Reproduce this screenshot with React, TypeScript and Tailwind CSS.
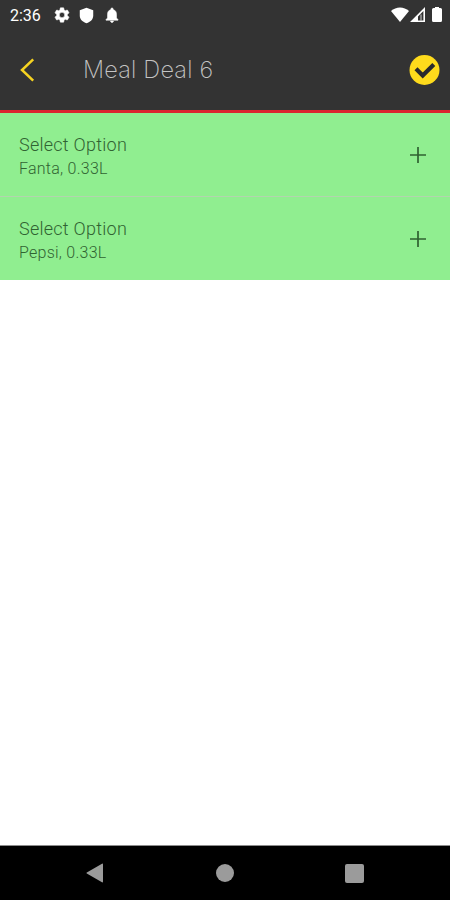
interface OptionRow {
  title: string;
  detail: string;
}

const options: OptionRow[] = [
  { title: "Select Option", detail: "Fanta, 0.33L" },
  { title: "Select Option", detail: "Pepsi, 0.33L" },
];

function StatusBar() {
  return (
    <div className="flex h-[30px] items-center justify-between pl-[10px] pr-2 text-white">
      <div className="flex items-center">
        <span className="w-[43px] pt-px text-[16px] leading-[29px]">2:36</span>
        <svg className="h-[18px] w-[18px]" viewBox="0 0 24 24" fill="currentColor" stroke="currentColor" strokeWidth="0.7">
          <path d="M19.14 12.94c.04-.3.06-.61.06-.94s-.02-.64-.07-.94l2.03-1.58c.18-.14.23-.41.12-.61l-1.92-3.32c-.12-.22-.37-.29-.59-.22l-2.39.96c-.5-.38-1.03-.7-1.62-.94l-.36-2.54c-.04-.24-.24-.41-.48-.41h-3.84c-.24 0-.43.17-.47.41l-.36 2.54c-.59.24-1.13.57-1.62.94l-2.39-.96c-.22-.08-.47 0-.59.22L2.74 8.87c-.12.21-.08.47.12.61l2.03 1.58c-.05.3-.09.63-.09.94s.02.64.07.94l-2.03 1.58c-.18.14-.23.41-.12.61l1.92 3.32c.12.22.37.29.59.22l2.39-.96c.5.38 1.03.7 1.62.94l.36 2.54c.05.24.24.41.48.41h3.84c.24 0 .44-.17.47-.41l.36-2.54c.59-.24 1.13-.56 1.62-.94l2.39.96c.22.08.47 0 .59-.22l1.92-3.32c.12-.22.07-.47-.12-.61zM12 15.6a3.6 3.6 0 1 1 0-7.2 3.6 3.6 0 0 1 0 7.2z" />
        </svg>
        <svg className="ml-[7px] h-[17px] w-[17px]" viewBox="0 0 24 24" fill="currentColor">
          <path d="M12 1 2.5 4.5v8c0 5 4.2 9 9.5 10.5 5.3-1.5 9.500-5.500 9.500-10.500v-8z" />
        </svg>
        <svg className="ml-2 h-[18px] w-[18px]" viewBox="0 0 24 24" fill="currentColor" stroke="currentColor" strokeWidth="0.7">
          <path d="M12 22c1.1 0 2-.9 2-2h-4c0 1.1.9 2 2 2zm6-6v-5c0-3.07-1.63-5.64-4.5-6.32V4a1.5 1.5 0 0 0-3 0v.68C7.64 5.36 6 7.92 6 11v5l-2 2v1h16v-1z" />
        </svg>
      </div>
      <div className="flex items-center pb-px">
        <svg className="h-[15px] w-[18px]" viewBox="0 0 18 15" fill="currentColor">
          <path d="M0 4C5-.8 13-.8 18 4L9 15z" />
        </svg>
        <svg className="ml-px h-[15px] w-[15px]" viewBox="0 0 15 15">
          <path d="M15 0v15H0zM13.4 4 8 9.4v4.200h5.400z" fill="currentColor" fillRule="evenodd" />
          <path d="M11 7.5v6" stroke="currentColor" strokeWidth="0.8" />
        </svg>
        <svg className="ml-[7px] h-[15px] w-[10px]" viewBox="0 0 10 15" fill="currentColor">
          <path d="M3 0h4v1h1.5Q10 1 10 2.5v11q0 1.5-1.5 1.5h-7Q0 15 0 13.5v-11Q0 1 1.5 1H3z" />
        </svg>
      </div>
    </div>
  );
}

function Header() {
  return (
    <header className="flex h-20 items-center pl-[19px] pr-[10px]">
      <button className="w-[64px]" aria-label="Back">
        <svg className="h-6 w-4" viewBox="0 0 16 24" fill="none" stroke="#f6d321" strokeWidth="2.5">
          <path d="M14.2 1.3 3 12l11.2 10.7" />
        </svg>
      </button>
      <h1 className="flex-1 font-['Inter','Roboto',sans-serif] text-[23.5px] font-extralight leading-8 tracking-[0.2px] text-[#c4c4c4]">
        Meal Deal 6
      </h1>
      <button aria-label="Confirm">
        <svg className="h-[31px] w-[31px]" viewBox="0 0 31 31" fill="none">
          <circle cx="15.5" cy="15" r="15" fill="#fedb1c" />
          <path d="m7 13.8 6.7 6.700L24.800 9.500" stroke="#292a2d" strokeWidth="4.2" />
        </svg>
      </button>
    </header>
  );
}

function Option({ title, detail }: OptionRow) {
  return (
    <li className="flex h-[84px] items-center justify-between border-b border-[#b2d4ae] pl-[19px] pr-6 last:h-[83px] last:border-b-0">
      <div className="pt-1 font-light">
        <div className="text-[18px] leading-6 tracking-[0.25px] text-[#306332]">{title}</div>
        <div className="text-[16px] leading-[23px] tracking-[0.25px] text-[#306332]">{detail}</div>
      </div>
      <svg className="h-4 w-4" viewBox="0 0 16 16" stroke="#2f6131" strokeWidth="1.7">
        <path d="M8 0v16M0 8h16" />
      </svg>
    </li>
  );
}

function NavBar() {
  return (
    <nav className="flex h-[55px] items-center justify-between border-t border-[#8c8c8c] bg-black pl-[86px] pr-[86px] text-[#9b9b9b]">
      <svg className="h-5 w-[18px]" viewBox="0 0 18 20" fill="currentColor">
        <path d="M16 .8q1-.6 1 .6v17.2q0 1.2-1 .6L.8 10.6q-.8-.6 0-1.2z" />
      </svg>
      <div className="h-[18px] w-[18px] rounded-full bg-[#9b9b9b]" />
      <div className="h-[19px] w-[19px] rounded-[2px] bg-[#9b9b9b]" />
    </nav>
  );
}

export default function App() {
  return (
    <div className="flex h-[900px] w-[450px] flex-col overflow-hidden bg-white font-['Roboto',sans-serif]">
      <div className="border-b-[3px] border-[#dc2530] bg-[#333333]">
        <StatusBar />
        <Header />
      </div>
      <ul className="bg-[#90ee90]">
        {options.map((option) => (
          <Option key={option.detail} {...option} />
        ))}
      </ul>
      <main className="flex-1" />
      <NavBar />
    </div>
  );
}
